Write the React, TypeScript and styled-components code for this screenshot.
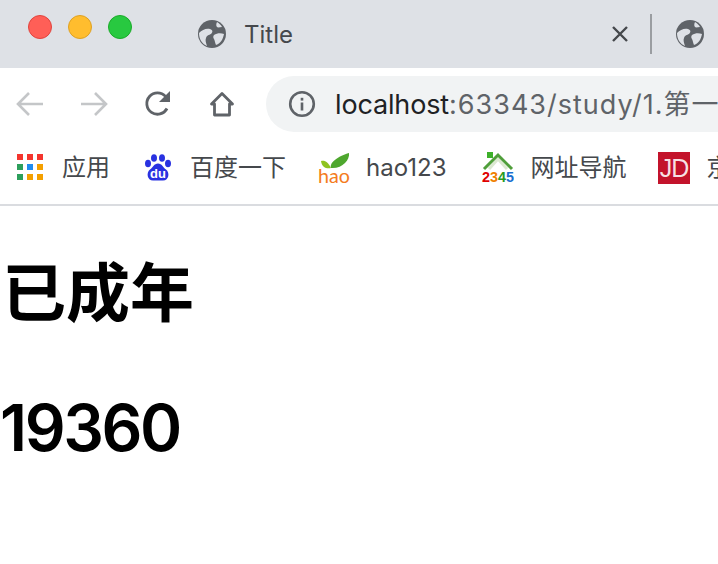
import styled, { createGlobalStyle } from 'styled-components'

const UI_FONT = `Inter, "Noto Sans CJK SC", sans-serif`

const GlobalStyle = createGlobalStyle`
  html, body {
    margin: 0;
    padding: 0;
    background: #fff;
    overflow: hidden;
  }
`

const Window = styled.div`
  width: 718px;
  height: 564px;
  overflow: hidden;
  font-family: ${UI_FONT};
`

const TabStrip = styled.div`
  height: 68px;
  background: #dee1e6;
  display: flex;
  align-items: center;
  padding-left: 28px;
`

const Lights = styled.div`
  display: flex;
  gap: 16px;
  margin-top: -14px;
  margin-right: 64px;
`

const Light = styled.span<{ $fill: string; $edge: string }>`
  width: 24px;
  height: 24px;
  box-sizing: border-box;
  border-radius: 50%;
  background: ${p => p.$fill};
  border: 1px solid ${p => p.$edge};
`

const TabTitle = styled.span`
  font-size: 24px;
  color: #45484c;
  margin-left: 16px;
  width: 366px;
`

const TabDivider = styled.span`
  width: 2px;
  height: 40px;
  background: #9a9da1;
  margin: 0 22px 0 20px;
`

const Toolbar = styled.div`
  height: 68px;
  box-sizing: border-box;
  padding: 4px 0 0 14px;
  display: flex;
  align-items: center;
`

const NavButton = styled.span<{ $gap?: number }>`
  display: flex;
  width: 32px;
  height: 32px;
  margin-right: ${p => p.$gap ?? 32}px;
`

const Omnibox = styled.div`
  flex: none;
  width: 452px;
  height: 56px;
  margin-left: 28px;
  border-radius: 28px 0 0 28px;
  background: #f1f3f4;
  display: flex;
  align-items: center;
  padding-left: 22px;
  white-space: nowrap;
  overflow: hidden;
`

const UrlText = styled.span`
  margin-left: 19px;
  padding-top: 2px;
  font-size: 27px;
  line-height: 32px;
  color: #202124;
  letter-spacing: -0.15px;
`

const UrlRest = styled.span`
  color: #5f6368;
  letter-spacing: 1px;
`

const BookmarkBar = styled.div`
  height: 68px;
  box-sizing: border-box;
  display: flex;
  align-items: center;
  gap: 32px;
  padding-left: 14px;
  padding-bottom: 4px;
  white-space: nowrap;
`

const Bookmark = styled.div<{ $trail?: number }>`
  display: flex;
  align-items: center;
  gap: 16px;
  flex: none;
  margin-right: ${p => p.$trail ?? 0}px;
`

const BookmarkIcon = styled.span`
  display: flex;
  width: 32px;
  height: 32px;
`

const BookmarkLabel = styled.span`
  font-size: 24px;
  line-height: 32px;
  color: #45484c;
`

const Rule = styled.div`
  height: 2px;
  background: #dadce0;
`

const Content = styled.main`
  color: #000;
`

const Heading = styled.h1`
  margin: 0;
  padding: 51px 0 0 2px;
  font-family: "Liberation Sans", "Noto Sans CJK SC", sans-serif;
  font-size: 64px;
  font-weight: 700;
  line-height: 74px;
`

const NumberHeading = styled.h1`
  margin: 0;
  padding-top: 60px;
  font-family: Inter, sans-serif;
  font-size: 64px;
  font-weight: 600;
  letter-spacing: -2.4px;
  line-height: 74px;
`

const Globe = () => (
  <svg width="32" height="32" viewBox="0 0 32 32">
    <circle cx="16" cy="16" r="14" fill="#5f6368" />
    <path
      d="M3 15c3-3 7-5 11-4 3 1 3 3 1 5-2 1-4 1-5 4-1 2 0 5 1 8-5-2-8-7-8-13zM21 4c2 1 4 3 5 5-2 0-4 1-5 0s-1-3 0-5zM18 17c3-2 7-2 10-1-1 5-3 9-8 11-1-2-1-4-2-6-1-1-1-3 0-4z"
      fill="#dee1e6"
    />
  </svg>
)

const Arrow = ({ flip }: { flip?: boolean }) => (
  <svg width="32" height="32" viewBox="0 0 32 32" style={flip ? { transform: 'scaleX(-1)' } : undefined}>
    <path d="M29 16H5M15 5 4 16l11 11" fill="none" stroke="#c4c6c8" strokeWidth="2.6" />
  </svg>
)

const Reload = () => (
  <svg width="32" height="32" viewBox="0 0 32 32">
    <path d="M25 20.5A10.7 10.7 0 1 1 23.5 8.4" fill="none" stroke="#5f6368" strokeWidth="2.8" />
    <path d="M28 3v11H17z" fill="#5f6368" />
  </svg>
)

const Home = () => (
  <svg width="32" height="32" viewBox="0 0 32 32">
    <path d="M16 5.5 5.5 16H8.5V27H23.5V16H26.5Z" fill="none" stroke="#5f6368" strokeWidth="2.8" strokeLinejoin="round" />
  </svg>
)

const Info = () => (
  <svg width="28" height="28" viewBox="0 0 28 28">
    <circle cx="14" cy="14" r="11.8" fill="none" stroke="#5f6368" strokeWidth="2.6" />
    <rect x="12.7" y="12.5" width="2.6" height="8" fill="#5f6368" />
    <rect x="12.7" y="7.8" width="2.6" height="2.8" fill="#5f6368" />
  </svg>
)

const Close = () => (
  <svg width="20" height="20" viewBox="0 0 20 20">
    <path d="M3 3l14 14M17 3 3 17" stroke="#45484c" strokeWidth="2.4" />
  </svg>
)

const APP_COLORS = [
  '#f4352e', '#f4352e', '#f4352e',
  '#2d9f5c', '#1f8cf0', '#f4a000',
  '#2d9f5c', '#f4a000', '#f4a000',
]

const AppsIcon = () => (
  <svg width="32" height="32" viewBox="0 0 32 32">
    {APP_COLORS.map((c, i) => (
      <rect key={i} x={3 + (i % 3) * 10} y={2 + Math.floor(i / 3) * 10} width="6" height="6" fill={c} />
    ))}
  </svg>
)

const BaiduIcon = () => (
  <svg width="32" height="32" viewBox="0 0 32 32">
    <g fill="#2932e1">
      <ellipse cx="6" cy="11.5" rx="3" ry="3.8" />
      <ellipse cx="12" cy="6" rx="3" ry="3.8" />
      <ellipse cx="20" cy="6" rx="3" ry="3.8" />
      <ellipse cx="26" cy="11.5" rx="3" ry="3.8" />
      <path d="M16 11.500c4 0 5 4 8 6 4 3 3 11-3 11H11C5 28.500 4 20.500 8 17.500c3-2 4-6 8-6z" />
    </g>
    <text x="16" y="26" textAnchor="middle" fontFamily="Liberation Sans" fontWeight="700" fontSize="13" fill="#fff">du</text>
  </svg>
)

const HaoIcon = () => (
  <svg width="32" height="32" viewBox="0 0 32 32">
    <path d="M3 9c4-1 7 1 10 7-4 1-9 0-10-7z" fill="#8fc31f" />
    <path d="M31 1c1 7-7 16-18 15-2-6 8-12 18-15z" fill="#4ea72e" />
    <text x="0" y="30.500" fontFamily="Lato" fontSize="20" textLength="32" lengthAdjust="spacingAndGlyphs" fill="#f47b20">hao</text>
  </svg>
)

const Icon2345 = () => (
  <svg width="32" height="32" viewBox="0 0 32 32">
    <path d="M7 17 16 7l9 10" fill="none" stroke="#dbe8d0" strokeWidth="3" />
    <path d="M2 17 16 3l14 14" fill="none" stroke="#4f9e3a" strokeWidth="3" />
    <path d="M5 0h6v6H5z" fill="#3db02a" />
    <text x="0" y="30" fontFamily="Liberation Sans" fontWeight="700" fontSize="14" textLength="8" lengthAdjust="spacingAndGlyphs" fill="#e00000">2</text>
    <text x="8" y="30" fontFamily="Liberation Sans" fontWeight="700" fontSize="14" textLength="8" lengthAdjust="spacingAndGlyphs" fill="#f08000">3</text>
    <text x="16" y="30" fontFamily="Liberation Sans" fontWeight="700" fontSize="14" textLength="8" lengthAdjust="spacingAndGlyphs" fill="#2a9a20">4</text>
    <text x="24" y="30" fontFamily="Liberation Sans" fontWeight="700" fontSize="14" textLength="8" lengthAdjust="spacingAndGlyphs" fill="#1a6fd0">5</text>
  </svg>
)

const JdIcon = () => (
  <svg width="32" height="32" viewBox="0 0 32 32">
    <rect width="32" height="32" fill="#c3132b" />
    <text x="16" y="25" textAnchor="middle" fontFamily="Liberation Sans" fontSize="25" letterSpacing="-1" fill="#fff" fillOpacity="0.88">JD</text>
  </svg>
)

const BOOKMARKS = [
  { label: '应用', icon: <AppsIcon /> },
  { label: '百度一下', icon: <BaiduIcon /> },
  { label: 'hao123', icon: <HaoIcon />, trail: 4 },
  { label: '网址导航', icon: <Icon2345 /> },
  { label: '京东', icon: <JdIcon /> },
]

export default function App() {
  return (
    <Window>
      <GlobalStyle />
      <TabStrip>
        <Lights>
          <Light $fill="#ff5f57" $edge="#e0443e" />
          <Light $fill="#ffbd2e" $edge="#dea123" />
          <Light $fill="#28c940" $edge="#1aab29" />
        </Lights>
        <Globe />
        <TabTitle>Title</TabTitle>
        <Close />
        <TabDivider />
        <Globe />
      </TabStrip>
      <Toolbar>
        <NavButton><Arrow /></NavButton>
        <NavButton><Arrow flip /></NavButton>
        <NavButton><Reload /></NavButton>
        <NavButton $gap={0}><Home /></NavButton>
        <Omnibox>
          <Info />
          <UrlText>
            localhost
            <UrlRest>:63343/study/1.第一</UrlRest>
          </UrlText>
        </Omnibox>
      </Toolbar>
      <BookmarkBar>
        {BOOKMARKS.map(b => (
          <Bookmark key={b.label} $trail={b.trail}>
            <BookmarkIcon>{b.icon}</BookmarkIcon>
            <BookmarkLabel>{b.label}</BookmarkLabel>
          </Bookmark>
        ))}
      </BookmarkBar>
      <Rule />
      <Content>
        <Heading>已成年</Heading>
        <NumberHeading>19360</NumberHeading>
      </Content>
    </Window>
  )
}
